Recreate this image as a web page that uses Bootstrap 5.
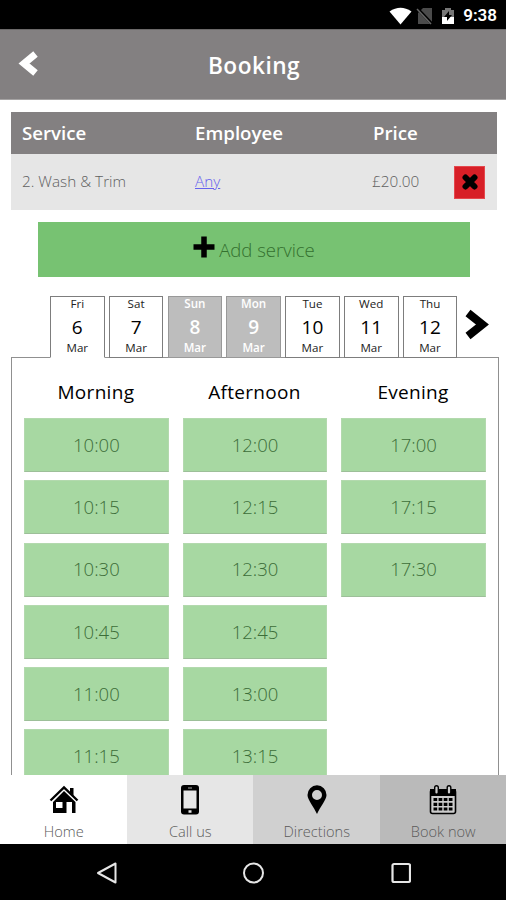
<!DOCTYPE html>
<html lang="en">
<head>
<meta charset="utf-8">
<meta name="viewport" content="width=device-width, initial-scale=1">
<title>Booking</title>
<link href="https://cdn.jsdelivr.net/npm/bootstrap@5.3.0/dist/css/bootstrap.min.css" rel="stylesheet">
<style>
body{font-family:"Open Sans",sans-serif;height:900px;color:#111;line-height:1}
svg{display:block;flex:none}
.status{height:29px;background:#000;color:#fff;font:600 17px/29px Roboto,sans-serif;padding:2px 9px 0 0}
.status span{margin-left:8px}
.titlebar{height:71px;background:#838081;border-top:1px solid #6b6969;border-bottom:1px solid #a5a3a3;color:#fff;display:grid;grid-template-columns:60px 1fr 60px}
.titlebar h1{font-size:22.7px;font-weight:600;letter-spacing:.45px;padding:2px 0 0 2px}
.titlebar svg{margin:-2px 0 0 18px}
.content{padding:12px 7px 0 11px;overflow:hidden;min-height:0}
.basket{width:486px;display:grid;grid-template-columns:184px 167px 75px 60px;font-size:15.3px}
.basket>*{background:#e6e6e6;height:56px;display:flex;align-items:center;font-weight:300;color:#606060;padding-bottom:0}
.basket>.hd{background:#838081;color:#fff;height:42px;font-size:18.7px;font-weight:600}
.basket>.c1{padding-left:11px}
.basket .price{padding-left:10px}
.basket>.hd.price{padding-left:11px}
.basket a{color:#6562ee}
.remove{width:31px;height:33px;background:#d71f27;border:1px solid #e4474d;border-radius:0;margin-left:17px}
.add{width:432px;height:55px;margin:12px 0 0 27px;background:#77c272;border:0;border-radius:0;color:#34702f;font-weight:300;font-size:18.5px;gap:4px}
.days{position:relative;z-index:1;height:62px;margin:19px 0 0 39px;gap:4.2px}
.day{width:54.6px;border:1px solid #7d7d7d;background:#fff;font-size:11.6px;padding-top:1px;color:#222}
.day b{font-size:19px;font-weight:400;line-height:19px;margin:8px 0 5px;color:#000}
.day.closed{background:#bdbdbd;color:#fff;border-color:#999;font-weight:600}
.day.closed b{color:#fff;font-weight:600}
.day.active{border-bottom-color:#fff}
.panel{width:488px;height:440px;border:1px solid #909090;margin-top:-1px;padding:0 12px}
.slots{display:grid;grid-template-columns:repeat(3,144.8px);column-gap:13.8px;grid-template-rows:52px;grid-auto-rows:54px;row-gap:8.2px}
.slots h2{font-size:19px;font-weight:400;text-align:center;margin:0;line-height:50px;padding-top:9px;letter-spacing:.3px;color:#000;height:52px;padding-right:1px}
.slot{background:#a7d8a2;border:1px solid #b3d9ae;border-bottom-color:#9dbf99;border-radius:0;color:#3c6d38;font-weight:300;font-size:18.5px;line-height:1;padding:0}
.tabs{height:69px;background:#fff}
.tabs>a{width:25%;color:#5a5a5a;text-decoration:none;font-size:14.6px;font-weight:300;padding:10px 0 0 1px;gap:9px}
.t2{background:#e6e6e6}.t3{background:#d0d0d0}.t4{background:#bababa}
.softkeys{height:56px;background:#000;display:grid;grid-template-columns:213px 80px 213px;padding-top:1px}
.addicon{margin-top:-6px}
</style>
<script src="https://cdn.jsdelivr.net/npm/bootstrap@5.3.0/dist/js/bootstrap.bundle.min.js"></script>
</head>
<body class="d-flex flex-column overflow-hidden">
<div class="status d-flex justify-content-end align-items-center flex-shrink-0">
  <svg width="23" height="18" viewBox="0 0 23 18"><path fill="#fff" d="M.5 4.500Q11.500-3 22.500 4.500L11.500 17.500Z"/></svg>
  <svg class="ms-1" width="17" height="18" viewBox="0 0 17 18"><path fill="#4b4b4b" d="M7 1h9v16H2V6Z"/><path stroke="#000" stroke-width="3" d="M1 1l16 17"/><path stroke="#666" stroke-width="1.500" d="M1 2l14 15"/></svg>
  <svg class="ms-2" width="14" height="18" viewBox="0 0 14 18"><path fill="#777" d="M4 1h6v2h3v8H1V3h3z"/><path fill="#fff" d="M1 10h12v7H1z"/><path fill="#000" d="M8 4l-5 6h3v4l5-6H8z"/></svg>
  <span>9:38</span>
</div>
<header class="titlebar flex-shrink-0 align-items-center">
  <svg width="20" height="25" viewBox="0 0 20 25"><path fill="none" stroke="#fff" stroke-width="7" d="M17.500 3L6 12.500L17.500 22"/></svg>
  <h1 class="m-0 text-center">Booking</h1>
</header>
<main class="content flex-fill">
  <section class="basket">
    <div class="hd c1">Service</div><div class="hd">Employee</div><div class="hd price">Price</div><div class="hd"></div>
    <div class="c1">2. Wash &amp; Trim</div><div><a href="#">Any</a></div><div class="price">£20.00</div>
    <div><button class="btn remove p-0 d-flex align-items-center justify-content-center" aria-label="Remove"><svg width="16" height="16" viewBox="0 0 16 16"><path stroke="#000" stroke-width="6" stroke-linecap="round" d="M3.500 3.500l9 9M12.500 3.500l-9 9"/></svg></button></div>
  </section>
  <button class="btn add d-flex align-items-center justify-content-center p-0"><svg class="addicon" width="22" height="22" viewBox="0 0 22 22"><path stroke="#000" stroke-width="5.500" d="M11 .5v21M.5 11h21"/></svg><span>Add service</span></button>
  <div class="days d-flex">
    <div class="day active d-flex flex-column align-items-center">Fri<b>6</b>Mar</div>
    <div class="day d-flex flex-column align-items-center">Sat<b>7</b>Mar</div>
    <div class="day closed d-flex flex-column align-items-center">Sun<b>8</b>Mar</div>
    <div class="day closed d-flex flex-column align-items-center">Mon<b>9</b>Mar</div>
    <div class="day d-flex flex-column align-items-center">Tue<b>10</b>Mar</div>
    <div class="day d-flex flex-column align-items-center">Wed<b>11</b>Mar</div>
    <div class="day d-flex flex-column align-items-center">Thu<b>12</b>Mar</div>
    <svg class="ms-1" width="24" height="56" viewBox="0 0 24 56"><path fill="none" stroke="#000" stroke-width="8" d="M3 17L17.500 28.500L3 40"/></svg>
  </div>
  <section class="panel">
    <div class="slots">
      <h2>Morning</h2><h2>Afternoon</h2><h2>Evening</h2>
      <button class="btn slot">10:00</button><button class="btn slot">12:00</button><button class="btn slot">17:00</button>
      <button class="btn slot">10:15</button><button class="btn slot">12:15</button><button class="btn slot">17:15</button>
      <button class="btn slot">10:30</button><button class="btn slot">12:30</button><button class="btn slot">17:30</button>
      <button class="btn slot">10:45</button><button class="btn slot">12:45</button><span></span>
      <button class="btn slot">11:00</button><button class="btn slot">13:00</button><span></span>
      <button class="btn slot">11:15</button><button class="btn slot">13:15</button>
    </div>
  </section>
</main>
<nav class="tabs d-flex flex-shrink-0">
  <a href="#" class="d-flex flex-column align-items-center"><svg width="30" height="30" viewBox="0 0 30 30"><path fill="none" stroke="#000" stroke-width="2.400" d="M1.500 15.500L15 2.500L28.500 15.500"/><path d="M21 3h3.500v8L21 7.500zM15 6L26.500 17v11h-3.500V17h-5.500v11H4V17z"/><path fill="#fff" d="M7 17h6.500v6H7z"/></svg>Home</a>
  <a href="#" class="t2 d-flex flex-column align-items-center"><svg width="30" height="30" viewBox="0 0 30 30"><rect x="6" y="0" width="18" height="29.500" rx="3"/><path fill="#e6e6e6" d="M8.500 5.500h13v18h-13zM13.500 25.300h3v2.500h-3z"/><path stroke="#aaa" d="M13 3h4"/></svg>Call us</a>
  <a href="#" class="t3 d-flex flex-column align-items-center"><svg width="30" height="30" viewBox="0 0 30 30"><path fill-rule="evenodd" d="M15 .3A9.500 9.500 0 0 1 24.500 10C24.500 15 18 22 15 29C12 22 5.500 15 5.500 10A9.500 9.500 0 0 1 15 .3M15 5A5 5 0 1 0 15 15A5 5 0 0 0 15 5"/></svg>Directions</a>
  <a href="#" class="t4 d-flex flex-column align-items-center"><svg width="30" height="30" viewBox="0 0 30 30"><rect x="2.500" y="5" width="25" height="23.500" rx="2" fill="#ccc" stroke="#000" stroke-width="1.600"/><path d="M2 4h26v7H2z"/><path d="M8.500 2.500v5M21 2.500v5" stroke="#000" stroke-width="5" stroke-linecap="round"/><path d="M8.500 2.500v5M21 2.500v5" stroke="#ccc" stroke-width="2.200" stroke-linecap="round"/><path d="M5.500 14.500h20M5.500 19.300h20M5.500 24h20" stroke="#000" stroke-width="3.200" stroke-dasharray="3.700 1.400"/></svg>Book now</a>
</nav>
<div class="softkeys flex-shrink-0 align-items-center">
  <svg class="mx-auto" width="22" height="24" viewBox="0 0 22 24"><path fill="none" stroke="#e6e6e6" stroke-width="2" stroke-linejoin="round" d="M2 12L19.500 2.500v19z"/></svg>
  <svg class="mx-auto" width="22" height="22" viewBox="0 0 22 22"><circle cx="11.500" cy="11" r="9.500" fill="none" stroke="#e6e6e6" stroke-width="2"/></svg>
  <svg class="mx-auto" width="22" height="22" viewBox="0 0 22 22"><rect x="3.500" y="2" width="17.500" height="18" rx="1.500" fill="none" stroke="#e6e6e6" stroke-width="2.200"/></svg>
</div>
</body>
</html>
